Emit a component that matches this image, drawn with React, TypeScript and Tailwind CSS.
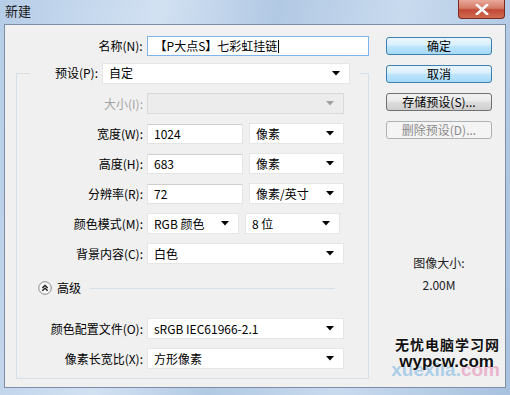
import React from 'react';

const font = "font-['Noto_Sans_CJK_SC',sans-serif]";

function Arrow({ grey = false }: { grey?: boolean }) {
  return (
    <svg width="8" height="5" viewBox="0 0 8 5" className="shrink-0">
      <polygon points="0,0 8,0 4,4.5" fill={grey ? '#a0a0a0' : '#000'} />
    </svg>
  );
}

function Select({ value, width, disabled = false }: { value: string; width: string; disabled?: boolean }) {
  return (
    <div
      className={`${width} h-[21px] flex items-center justify-between pl-[6px] pr-[9px] border ${
        disabled ? 'bg-[#ececec] border-[#d9d9d9]' : 'bg-white border-[#e6e6e6]'
      }`}
    >
      <span className="leading-none">{value}</span>
      <Arrow grey={disabled} />
    </div>
  );
}

function Input({ value, width }: { value: string; width: string }) {
  return (
    <div className={`${width} h-[20px] flex items-center pl-[6px] bg-white border border-[#e4e4e4] border-t-[#d0d0d0]`}>
      <span className="leading-none">{value}</span>
    </div>
  );
}

function Row({ label, disabled = false, children }: { label: string; disabled?: boolean; children: React.ReactNode }) {
  return (
    <div className="flex items-center h-[21px]">
      <div className={`w-[130px] text-right pr-[4px] ${disabled ? 'text-[#a3a3a3]' : ''}`}>{label}</div>
      <div className="flex items-center gap-[6px]">{children}</div>
    </div>
  );
}

function Button({ label, tone }: { label: string; tone: 'blue' | 'grey' | 'off' }) {
  const cls =
    tone === 'blue'
      ? 'border-[#3c7fb1] bg-[linear-gradient(#eaf6fd_0%,#d9f0fc_45%,#bee6fd_50%,#a7d9f5_100%)]'
      : tone === 'grey'
      ? 'border-[#707070] bg-[linear-gradient(#f2f2f2_0%,#ebebeb_45%,#dddddd_50%,#cfcfcf_100%)]'
      : 'border-[#adb2b5] bg-[#f4f4f4] text-[#8a8a8a]';
  return (
    <div className={`w-[106px] h-[18px] flex items-center justify-center rounded-[3px] border ${cls}`}>
      <span className="leading-none">{label}</span>
    </div>
  );
}

function AdvancedIcon() {
  return (
    <svg width="14" height="14" viewBox="0 0 14 14">
      <circle cx="7" cy="7" r="6.3" fill="#f7f7f7" stroke="#8a8a8a" />
      <polyline points="4.3,7 7,4.5 9.7,7" fill="none" stroke="#222" strokeWidth="1.4" />
      <polyline points="4.3,9.8 7,7.3 9.7,9.8" fill="none" stroke="#222" strokeWidth="1.4" />
    </svg>
  );
}

export default function App() {
  return (
    <div
      className={`${font} text-[12px] text-black w-[510px] h-[395px] overflow-hidden flex flex-col bg-[linear-gradient(100deg,#b6cde7_0%,#d2e1f2_28%,#b2c9e4_48%,#c8daee_70%,#a8c1df_100%)] relative`}
    >
      {/* title bar */}
      <div className="h-[24px] flex items-start justify-between shrink-0">
        <div className="pl-[5px] pt-[4px] leading-none text-[13px] text-[#1a1a1a]">新建</div>
        <div className="mr-[5px] w-[47px] h-[19px] rounded-b-[4px] border border-t-0 border-[#7a2a20] bg-[linear-gradient(#e9a99b_0%,#d47a68_45%,#c14a35_55%,#cf6b52_100%)] flex items-center justify-center">
          <svg width="14" height="11" viewBox="0 0 14 11">
            <path d="M2 1 L12 10 M12 1 L2 10" stroke="#fff" strokeWidth="2.6" strokeLinecap="square" />
            <path d="M2 1 L12 10 M12 1 L2 10" stroke="#f4f4f4" strokeWidth="1.4" />
          </svg>
        </div>
      </div>

      {/* client area */}
      <div className="mx-[4px] h-[364px] border border-[#7d8fa5] bg-[#f0f0f0] flex shrink-0">
        {/* left column */}
        <div className="w-[364px] shrink-0 flex flex-col pt-[11px]">
          <div className="flex items-center h-[20px]">
            <div className="w-[142px] text-right pr-[4px]">名称(N):</div>
            <div className="w-[223px] h-[20px] flex items-center pl-[7px] bg-white border border-[#7eb4ea]">
              <span className="leading-none">【P大点S】七彩虹挂链</span>
              <span className="w-px h-[13px] bg-black ml-px" />
            </div>
          </div>

          {/* preset group */}
          <div className="ml-[11px] mt-[6px] w-[353px] flex flex-col">
            <div className="flex h-[22px] items-center">
              <div className="self-end w-[14px] h-[11px] border-l border-t border-[#d5dfe5]" />
              <div className="w-[72px] text-right pr-[4px]">预设(P):</div>
              <Select value="自定" width="w-[248px]" />
              <div className="flex-1" />
              <div className="self-end w-[9px] h-[11px] border-r border-t border-[#d5dfe5]" />
            </div>
            <div className="border-l border-r border-b border-[#d5dfe5] flex flex-col pt-[9px] pb-[9px] gap-[9px]">
              <Row label="大小(I):" disabled>
                <Select value="" width="w-[197px]" disabled />
              </Row>
              <Row label="宽度(W):">
                <Input value="1024" width="w-[96px]" />
                <Select value="像素" width="w-[95px]" />
              </Row>
              <Row label="高度(H):">
                <Input value="683" width="w-[96px]" />
                <Select value="像素" width="w-[95px]" />
              </Row>
              <Row label="分辨率(R):">
                <Input value="72" width="w-[96px]" />
                <Select value="像素/英寸" width="w-[95px]" />
              </Row>
              <Row label="颜色模式(M):">
                <Select value="RGB 颜色" width="w-[92px]" />
                <Select value="8 位" width="w-[95px]" />
              </Row>
              <Row label="背景内容(C):">
                <Select value="白色" width="w-[197px]" />
              </Row>

              <div className="flex items-center h-[20px] mt-[5px] pl-[21px] gap-[5px]">
                <AdvancedIcon />
                <span className="leading-none">高级</span>
                <div className="ml-[4px] w-[245px] h-px bg-[#d5dfe5]" />
              </div>

              <div className="mt-[11px] flex flex-col gap-[9px]">
                <Row label="颜色配置文件(O):">
                  <Select value="sRGB IEC61966-2.1" width="w-[197px]" />
                </Row>
                <Row label="像素长宽比(X):">
                  <Select value="方形像素" width="w-[197px]" />
                </Row>
              </div>
            </div>
          </div>
        </div>

        {/* right column */}
        <div className="ml-[17px] pt-[12px] flex flex-col">
          <div className="flex flex-col gap-[10px]">
            <Button label="确定" tone="blue" />
            <Button label="取消" tone="blue" />
            <Button label="存储预设(S)..." tone="grey" />
            <Button label="删除预设(D)..." tone="off" />
          </div>
          <div className="mt-[118px] w-[106px] flex flex-col items-center gap-[10px] text-[#222]">
            <span className="leading-none">图像大小:</span>
            <span className="leading-none">2.00M</span>
          </div>
        </div>
      </div>

      {/* watermark */}
      <div className="absolute left-[392px] top-[337px] w-[108px] flex flex-col items-end pointer-events-none whitespace-nowrap">
        <span className="text-[14px] font-bold leading-none tracking-[1px] text-[#111] [text-shadow:0_0_2px_#fff]">无忧电脑学习网</span>
        <div className="relative h-[24px] w-full">
          <span className="absolute right-0 top-[9px] text-[19px] font-bold leading-none opacity-35 font-['Liberation_Sans',sans-serif]">
            <span className="text-[#2f8fd8]">xuexila.</span>
            <span className="text-[#e0468c]">com</span>
          </span>
          <span className="absolute right-[6px] top-[2px] text-[17px] font-bold leading-none text-[#111] font-['Liberation_Sans',sans-serif] [text-shadow:0_0_2px_#fff]">
            wypcw.com
          </span>
        </div>
      </div>
    </div>
  );
}
